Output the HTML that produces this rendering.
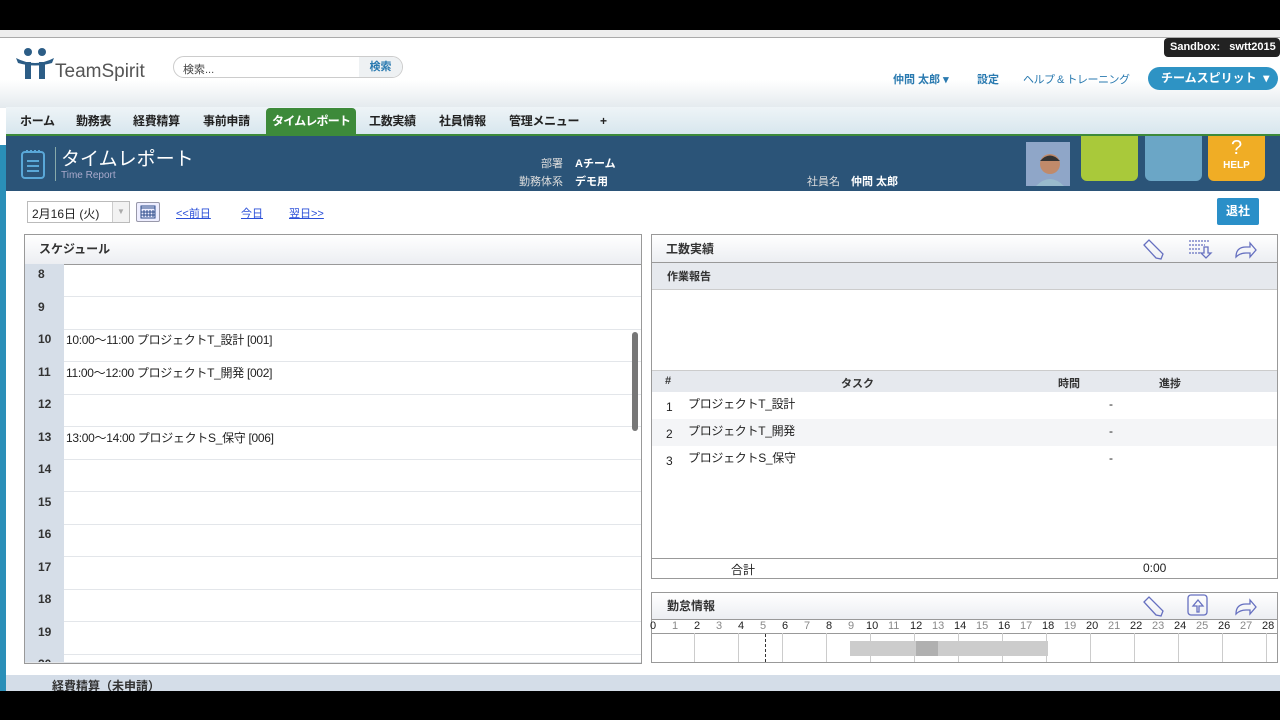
<!DOCTYPE html>
<html><head><meta charset="utf-8"><style>
*{box-sizing:border-box;margin:0;padding:0}
body{width:1280px;height:720px;overflow:hidden;background:#fff;font-family:"Liberation Sans","Noto Sans CJK JP",sans-serif;font-size:12px;color:#222;position:relative}
.a{position:absolute;white-space:nowrap}
.blk{background:#000}
.tab{position:absolute;top:108px;height:26px;line-height:26px;font-size:12px;font-weight:bold;color:#222;letter-spacing:-0.3px}
.row{position:absolute;left:25px;width:616px;height:33px;border-bottom:1px solid #e3e6ea}
.row .n{position:absolute;left:0;top:0;width:39px;height:33px;background:#d6dee8;font-weight:bold;font-size:12px;padding:3px 0 0 13px;color:#333}
.row .t{position:absolute;left:41px;top:2px;font-size:12px;letter-spacing:-0.3px}
.hdr{background:linear-gradient(#fff,#eceef2);border-bottom:1px solid #999}
.hr{position:absolute;top:620px;font-size:11px;color:#333}
.vl{position:absolute;top:633px;height:29px;width:1px;background:#ccc}
</style></head><body>
<div class="a blk" style="left:0;top:0;width:1280px;height:30px"></div>
<div class="a" style="left:0;top:30px;width:1280px;height:8px;background:#eee;border-bottom:1px solid #aaa"></div>
<div class="a" style="left:0;top:38px;width:1280px;height:70px;background:linear-gradient(#fff 60%,#e4eaee)"></div>
<svg class="a" style="left:14px;top:46px" width="48" height="36" viewBox="0 0 48 36"><circle cx="14" cy="6" r="4" fill="#2c5d86"/><circle cx="28" cy="6" r="4" fill="#2c5d86"/><path d="M2 12 Q21 22 40 12 L38 17 Q21 22 4 17Z" fill="#2c5d86"/><rect x="11" y="16" width="6" height="17" fill="#2c5d86"/><rect x="25" y="16" width="6" height="17" fill="#2c5d86"/></svg>
<div class="a" style="left:55px;top:61px;font-size:19px;color:#555">TeamSpirit</div>
<div class="a" style="left:173px;top:56px;width:230px;height:22px;border:1px solid #ccc;border-radius:11px;background:#fff"></div>
<div class="a" style="left:359px;top:57px;width:43px;height:20px;border-radius:0 10px 10px 0;background:#eef1f3;color:#2a7ab0;font-size:11px;font-weight:bold;text-align:center;line-height:20px">検索</div>
<div class="a" style="left:183px;top:61px;font-size:11px;color:#444">検索...</div>
<div class="a" style="left:1164px;top:38px;width:116px;height:19px;background:#222;border-radius:4px;color:#fff;font-size:11px;font-weight:bold;line-height:19px;padding-left:6px">Sandbox:&nbsp;&nbsp; swtt2015</div>
<div class="a" style="left:893px;top:71px;font-size:11px;color:#2a7ab0;font-weight:bold">仲間 太郎 ▾</div>
<div class="a" style="left:977px;top:71px;font-size:11px;color:#2a7ab0;font-weight:bold">設定</div>
<div class="a" style="left:1023px;top:71px;font-size:11px;color:#2a7ab0;letter-spacing:-0.5px">ヘルプ &amp; トレーニング</div>
<div class="a" style="left:1148px;top:67px;width:130px;height:23px;background:#2e93c4;border-radius:12px;color:#fff;font-size:12px;font-weight:bold;line-height:23px;padding-left:13px">チームスピリット&nbsp;&nbsp;▾</div>
<div class="a" style="left:6px;top:107px;width:1274px;height:28px;background:linear-gradient(#eef4f7,#d7e6ee)"></div>
<div class="tab" style="left:20px">ホーム</div>
<div class="tab" style="left:76px">勤務表</div>
<div class="tab" style="left:133px">経費精算</div>
<div class="tab" style="left:203px">事前申請</div>
<div class="a" style="left:266px;top:108px;width:90px;height:27px;background:#3d8a3a;border-radius:4px 4px 0 0"></div>
<div class="tab" style="left:272px;color:#fff;letter-spacing:-0.8px">タイムレポート</div>
<div class="tab" style="left:369px">工数実績</div>
<div class="tab" style="left:439px">社員情報</div>
<div class="tab" style="left:509px">管理メニュー</div>
<div class="tab" style="left:600px">+</div>
<div class="a" style="left:6px;top:134px;width:1274px;height:2px;background:#3d8a3a"></div>
<div class="a" style="left:6px;top:136px;width:1274px;height:55px;background:#2b5478"></div>
<div class="a" style="left:0;top:145px;width:6px;height:546px;background:#2a8fb8"></div>
<svg class="a" style="left:20px;top:148px" width="28" height="32"><rect x="2" y="4" width="22" height="26" rx="3" fill="none" stroke="#5aa8d8" stroke-width="2"/><path d="M7 13h12M7 18h12M7 23h12" stroke="#5aa8d8" stroke-width="2"/><path d="M6 3h14" stroke="#5aa8d8" stroke-dasharray="2 2" stroke-width="2"/></svg>
<div class="a" style="left:55px;top:147px;width:1px;height:34px;background:#8aa"></div>
<div class="a" style="left:61px;top:144px;font-size:19px;color:#fff">タイムレポート</div>
<div class="a" style="left:61px;top:170px;font-size:10px;color:#aac">Time Report</div>
<div class="a" style="left:541px;top:155px;font-size:11px;color:#ddd">部署</div>
<div class="a" style="left:575px;top:155px;font-size:11px;color:#fff;font-weight:bold">Aチーム</div>
<div class="a" style="left:519px;top:173px;font-size:11px;color:#ddd">勤務体系</div>
<div class="a" style="left:575px;top:173px;font-size:11px;color:#fff;font-weight:bold">デモ用</div>
<div class="a" style="left:807px;top:173px;font-size:11px;color:#ddd">社員名</div>
<div class="a" style="left:851px;top:173px;font-size:11px;color:#fff;font-weight:bold">仲間 太郎</div>
<div class="a" style="left:1026px;top:142px;width:44px;height:44px;background:#8fa6c8"><svg width="44" height="44"><circle cx="24" cy="22" r="10" fill="#c08a6a"/><path d="M14 19 Q24 8 34 19" fill="#333"/><path d="M10 44 Q24 30 38 44Z" fill="#9bc"/></svg></div>
<div class="a" style="left:1081px;top:136px;width:57px;height:45px;background:#a9c93a;border-radius:0 0 6px 6px"></div>
<div class="a" style="left:1145px;top:136px;width:57px;height:45px;background:#6ba6c6;border-radius:0 0 6px 6px"></div>
<div class="a" style="left:1208px;top:136px;width:57px;height:45px;background:#f0ad25;border-radius:0 0 6px 6px;color:#fff;text-align:center"><div style="font-size:20px;line-height:24px">?</div><div style="font-size:10px;font-weight:bold">HELP</div></div>
<div class="a" style="left:27px;top:201px;width:103px;height:22px;border:1px solid #bbb;font-size:12px;padding:3px 0 0 4px">2月16日 (火)</div>
<div class="a" style="left:112px;top:202px;width:17px;height:20px;border-left:1px solid #ccc;background:#f2f2f2;color:#aaa;font-size:8px;text-align:center;line-height:20px">▼</div>
<div class="a" style="left:136px;top:202px;width:24px;height:20px;border:1px solid #99a;border-radius:2px;background:#eef"><svg width="22" height="18"><rect x="4" y="3" width="14" height="12" fill="none" stroke="#2b4a8a"/><path d="M4 5h14M7 7v7M10 7v7M13 7v7M16 7v7M4 9h14M4 12h14" stroke="#2b4a8a"/></svg></div>
<div class="a" style="left:176px;top:205px;font-size:11px;color:#2a4fd8;text-decoration:underline">&lt;&lt;前日</div>
<div class="a" style="left:241px;top:205px;font-size:11px;color:#2a4fd8;text-decoration:underline">今日</div>
<div class="a" style="left:289px;top:205px;font-size:11px;color:#2a4fd8;text-decoration:underline">翌日&gt;&gt;</div>
<div class="a" style="left:1217px;top:198px;width:42px;height:27px;background:#2a8fc8;border-radius:2px;color:#fff;font-weight:bold;font-size:12px;text-align:center;line-height:27px">退社</div>
<div class="a" style="left:24px;top:234px;width:618px;height:430px;border:1px solid #999;overflow:hidden">
<div class="hdr" style="height:30px;padding:5px 0 0 14px;font-weight:bold;font-size:12px;color:#333">スケジュール</div>
</div>
<div class="row" style="top:264px"><div class="n">8</div></div>
<div class="row" style="top:297px"><div class="n">9</div></div>
<div class="row" style="top:329px"><div class="n">10</div><div class="t">10:00～11:00 プロジェクトT_設計 [001]</div></div>
<div class="row" style="top:362px"><div class="n">11</div><div class="t">11:00～12:00 プロジェクトT_開発 [002]</div></div>
<div class="row" style="top:394px"><div class="n">12</div></div>
<div class="row" style="top:427px"><div class="n">13</div><div class="t">13:00～14:00 プロジェクトS_保守 [006]</div></div>
<div class="row" style="top:459px"><div class="n">14</div></div>
<div class="row" style="top:492px"><div class="n">15</div></div>
<div class="row" style="top:524px"><div class="n">16</div></div>
<div class="row" style="top:557px"><div class="n">17</div></div>
<div class="row" style="top:589px"><div class="n">18</div></div>
<div class="row" style="top:622px"><div class="n">19</div></div>
<div class="row" style="top:654px;height:9px;overflow:hidden"><div class="n">20</div></div>
<div class="a" style="left:632px;top:332px;width:6px;height:99px;background:#777;border-radius:3px"></div>
<div class="a" style="left:651px;top:234px;width:627px;height:345px;border:1px solid #999"></div>
<div class="a hdr" style="left:652px;top:235px;width:625px;height:28px;padding:5px 0 0 14px;font-weight:bold;font-size:12px;color:#333">工数実績</div>
<svg class="a" style="left:1140px;top:237px" width="130" height="24" fill="none" stroke="#6670c0" stroke-width="1.3"><path d="M4 8l5-5 14 14-2 5-5-1z"/><path d="M49 4h20M49 8h16M49 12h12M49 16h12" stroke-dasharray="2 1"/><path d="M64 10v6h-3l5 5 5-5h-3v-6z"/><path d="M96 20q0-10 10-10h4v-4l6 7-6 7v-4h-4q-6 0-10 4z"/></svg>
<div class="a" style="left:652px;top:263px;width:625px;height:27px;background:#e6e9ee;border-bottom:1px solid #ccc;padding:5px 0 0 15px;font-size:11px;font-weight:bold;color:#333">作業報告</div>
<div class="a" style="left:652px;top:370px;width:625px;height:22px;background:#e6e9ee;border-top:1px solid #ccc;font-size:11px;font-weight:bold;color:#333"><span class="a" style="left:13px;top:4px">#</span><span class="a" style="left:189px;top:4px">タスク</span><span class="a" style="left:406px;top:4px">時間</span><span class="a" style="left:507px;top:4px">進捗</span></div>
<div class="a" style="left:652px;top:392px;width:625px;height:27px"><span class="a" style="left:14px;top:8px">1</span><span class="a" style="left:36px;top:3px;letter-spacing:-0.3px">プロジェクトT_設計</span><span class="a" style="left:457px;top:5px">-</span></div>
<div class="a" style="left:652px;top:419px;width:625px;height:27px;background:#f4f5f7"><span class="a" style="left:14px;top:8px">2</span><span class="a" style="left:36px;top:3px;letter-spacing:-0.3px">プロジェクトT_開発</span><span class="a" style="left:457px;top:5px">-</span></div>
<div class="a" style="left:652px;top:446px;width:625px;height:27px"><span class="a" style="left:14px;top:8px">3</span><span class="a" style="left:36px;top:3px;letter-spacing:-0.3px">プロジェクトS_保守</span><span class="a" style="left:457px;top:5px">-</span></div>
<div class="a" style="left:652px;top:558px;width:625px;height:1px;background:#999"></div>
<div class="a" style="left:731px;top:561px">合計</div>
<div class="a" style="left:1143px;top:561px">0:00</div>
<div class="a" style="left:651px;top:592px;width:627px;height:71px;border:1px solid #999"></div>
<div class="a hdr" style="left:652px;top:593px;width:625px;height:27px;padding:4px 0 0 15px;font-weight:bold;font-size:12px;color:#333">勤怠情報</div>
<svg class="a" style="left:1140px;top:594px" width="130" height="24" fill="none" stroke="#6670c0" stroke-width="1.3"><path d="M4 8l5-5 14 14-2 5-5-1z"/><rect x="48" y="1" width="19" height="20" rx="3"/><path d="M57 18v-6h-4l5-6 5 6h-4v6z"/><path d="M96 20q0-10 10-10h4v-4l6 7-6 7v-4h-4q-6 0-10 4z"/></svg>
<div class="a" style="left:652px;top:633px;width:625px;height:1px;background:#999"></div>
<div class="a" style="left:850px;top:641px;width:198px;height:15px;background:#ccc"></div>
<div class="a" style="left:916px;top:641px;width:22px;height:15px;background:#b0b0b0"></div>
<div class="a" style="left:765px;top:634px;height:28px;border-left:1px dashed #333"></div>
<div id="tl"></div>
<div class="a" style="left:6px;top:675px;width:1274px;height:16px;background:#d4dde8"></div>
<div class="a" style="left:52px;top:677px;font-size:12px;font-weight:bold;color:#333">経費精算（未申請）</div>
<div class="a blk" style="left:0;top:691px;width:1280px;height:29px"></div>
<script>
var h='';for(var i=0;i<=28;i++){var x=652+i*22;h+='<div class="hr" style="left:'+(x-(i>9?6:2))+'px;color:'+(i%2?'#888':'#222')+'">'+i+'</div>';if(i%2==0&&i>0)h+='<div class="vl" style="left:'+(x-2)+'px"></div>';}
document.getElementById('tl').innerHTML=h;
</script>
</body></html>
